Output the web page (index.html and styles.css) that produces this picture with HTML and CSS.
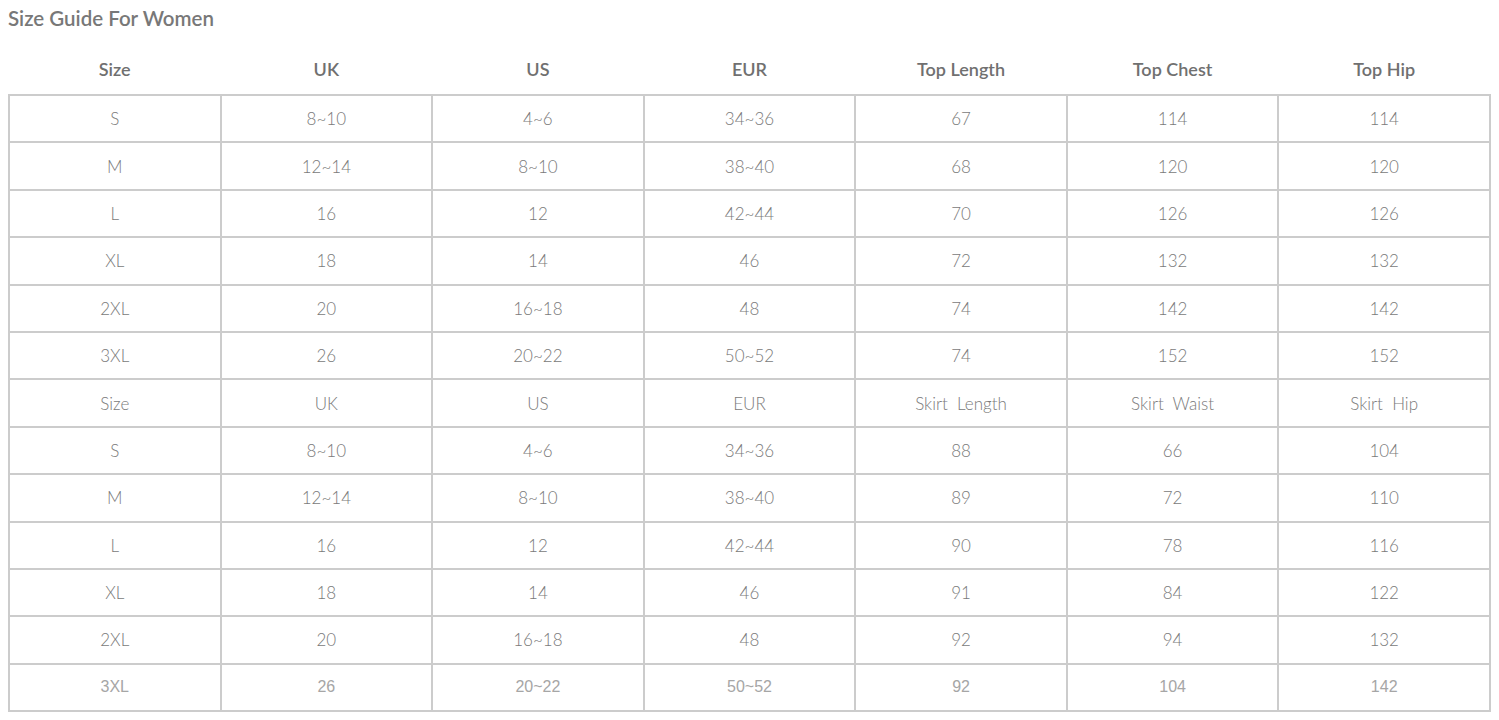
FILE: index.html
```html
<!DOCTYPE html>
<html>
<head>
<meta charset="utf-8">
<link rel="stylesheet" href="styles.css">
</head>
<body>
<div class="title">Size Guide For Women</div>
<table class="guide">
  <thead>
    <tr><th>Size</th><th>UK</th><th>US</th><th>EUR</th><th>Top Length</th><th>Top Chest</th><th>Top Hip</th></tr>
  </thead>
  <tbody>
    <tr><td>S</td><td>8~10</td><td>4~6</td><td>34~36</td><td>67</td><td>114</td><td>114</td></tr>
    <tr><td>M</td><td>12~14</td><td>8~10</td><td>38~40</td><td>68</td><td>120</td><td>120</td></tr>
    <tr><td>L</td><td>16</td><td>12</td><td>42~44</td><td>70</td><td>126</td><td>126</td></tr>
    <tr><td>XL</td><td>18</td><td>14</td><td>46</td><td>72</td><td>132</td><td>132</td></tr>
    <tr><td>2XL</td><td>20</td><td>16~18</td><td>48</td><td>74</td><td>142</td><td>142</td></tr>
    <tr><td>3XL</td><td>26</td><td>20~22</td><td>50~52</td><td>74</td><td>152</td><td>152</td></tr>
    <tr><td>Size</td><td>UK</td><td>US</td><td>EUR</td><td>Skirt&nbsp; Length</td><td>Skirt&nbsp; Waist</td><td>Skirt&nbsp; Hip</td></tr>
    <tr><td>S</td><td>8~10</td><td>4~6</td><td>34~36</td><td>88</td><td>66</td><td>104</td></tr>
    <tr><td>M</td><td>12~14</td><td>8~10</td><td>38~40</td><td>89</td><td>72</td><td>110</td></tr>
    <tr><td>L</td><td>16</td><td>12</td><td>42~44</td><td>90</td><td>78</td><td>116</td></tr>
    <tr><td>XL</td><td>18</td><td>14</td><td>46</td><td>91</td><td>84</td><td>122</td></tr>
    <tr><td>2XL</td><td>20</td><td>16~18</td><td>48</td><td>92</td><td>94</td><td>132</td></tr>
    <tr class="last"><td>3XL</td><td>26</td><td>20~22</td><td>50~52</td><td>92</td><td>104</td><td>142</td></tr>
  </tbody>
</table>
</body>
</html>
```

FILE: styles.css
```css
body {
  margin: 8px;
  background: #ffffff;
  font-family: Lato, "Open Sans", sans-serif;
  color: #777777;
}
.title {
  font-size: 20.5px;
  line-height: 20px;
  font-weight: 600;
  color: #787878;
}
.guide {
  width: 100%;
  margin-top: 16px;
  border-collapse: collapse;
  table-layout: fixed;
}
.guide th {
  height: 50px;
  padding: 0;
  font-size: 18px;
  font-weight: 600;
  color: #707070;
  text-align: center;
  vertical-align: middle;
}
.guide td {
  height: 45.4px;
  padding: 0;
  border: 2px solid #cccccc;
  font-size: 17px;
  font-weight: 300;
  color: #7a7a7a;
  text-align: center;
  vertical-align: middle;
}
.guide tr.last td {
  font-family: "Liberation Sans", Arial, sans-serif;
  font-size: 16px;
  font-weight: 400;
  color: #a6a6a6;
}
```
